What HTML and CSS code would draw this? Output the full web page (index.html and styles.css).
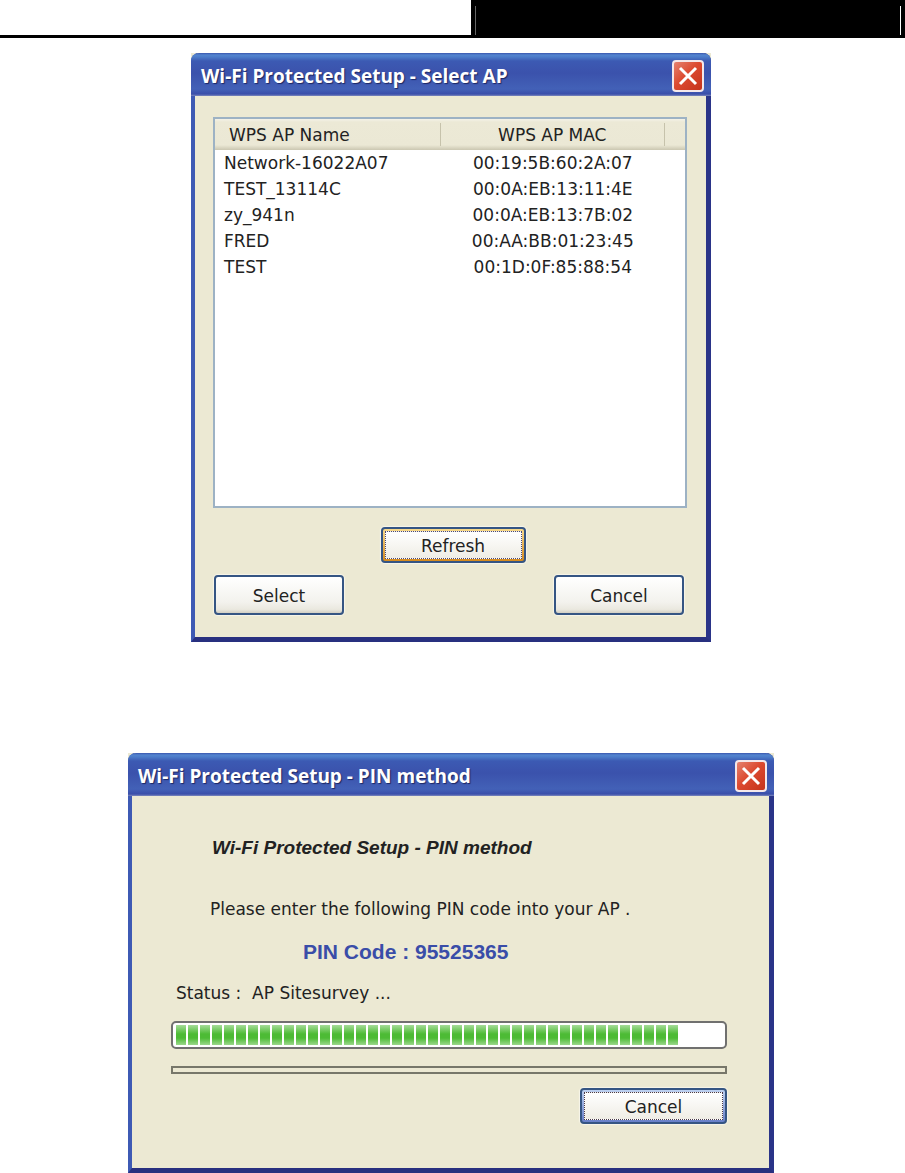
FILE: index.html
```
<!DOCTYPE html>
<html lang="en">
<head>
    <meta charset="UTF-8">
    <meta name="viewport" content="width=device-width, initial-scale=1.0">
    <title>Wi-Fi Protected Setup</title>
    <link rel="stylesheet" href="styles.css">
</head>
<body>
    <header class="page-header">
        <div class="header-box"></div>
    </header>
    <main>
        <div class="frame select-ap">
            <section class="dialog">
                <div class="title-bar">
                    <h2>Wi-Fi Protected Setup - Select AP</h2>
                    <button class="close" aria-label="Close">
                        <svg viewBox="0 0 32 32" width="32" height="32"><path d="M8 8L24 24M24 8L8 24"/></svg>
                    </button>
                </div>
                <div class="dialog-body">
                    <div class="ap-list">
                        <table>
                            <thead>
                                <tr><th class="name"><span>WPS AP Name</span></th><th class="mac"><span>WPS AP MAC</span></th><th class="rest"></th></tr>
                            </thead>
                            <tbody>
                                <tr><td>Network-16022A07</td><td class="mac">00:19:5B:60:2A:07</td><td></td></tr>
                                <tr><td>TEST_13114C</td><td class="mac">00:0A:EB:13:11:4E</td><td></td></tr>
                                <tr><td>zy_941n</td><td class="mac">00:0A:EB:13:7B:02</td><td></td></tr>
                                <tr><td>FRED</td><td class="mac">00:AA:BB:01:23:45</td><td></td></tr>
                                <tr><td>TEST</td><td class="mac">00:1D:0F:85:88:54</td><td></td></tr>
                            </tbody>
                        </table>
                    </div>
                    <button class="btn refresh"><span>Refresh</span></button>
                    <div class="actions">
                        <button class="btn">Select</button>
                        <button class="btn">Cancel</button>
                    </div>
                </div>
            </section>
        </div>
        <div class="frame pin-method">
            <section class="dialog">
                <div class="title-bar">
                    <h2>Wi-Fi Protected Setup - PIN method</h2>
                    <button class="close" aria-label="Close">
                        <svg viewBox="0 0 32 32" width="32" height="32"><path d="M8 8L24 24M24 8L8 24"/></svg>
                    </button>
                </div>
                <div class="dialog-body">
                    <h3>Wi-Fi Protected Setup - PIN method</h3>
                    <p class="hint">Please enter the following PIN code into your AP .</p>
                    <p class="pin">PIN Code : 95525365</p>
                    <label class="status" for="survey">Status :&nbsp; AP Sitesurvey ...</label>
                    <progress id="survey" value="92" max="100"></progress>
                    <div class="divider"></div>
                    <button class="btn cancel"><span>Cancel</span></button>
                </div>
            </section>
        </div>
    </main>
</body>
</html>
```
FILE: styles.css
```
* {
    box-sizing: border-box;
}
body {
    margin: 0;
    background: #fff;
    color: #222;
    font-family: "DejaVu Sans", Verdana, sans-serif;
    font-size: 17px;
}
h2, h3, p {
    margin: 0;
}
.page-header {
    display: flex;
    justify-content: flex-end;
    height: 38px;
    border-bottom: 3px solid #000;
}
.header-box {
    width: 48%;
    padding: 6px 4px 0;
    background: #000;
}
.header-box::before {
    content: "";
    display: block;
    height: 29px;
    border-left: 1px solid #666;
    border-right: 1px solid #fff;
}
main {
    padding: 15px 3px 0 0;
}
.frame {
    width: 100%;
    margin: 0 auto;
    background: #ece9d3;
}
.select-ap {
    max-width: 520px;
}
.pin-method {
    max-width: 646px;
    margin-top: 111px;
}
.dialog {
    border: solid;
    border-width: 0 5px 5px 4px;
    border-color: #2a3488 #2a3488 #28307f #3e5ab4;
    border-radius: 8px 8px 0 0;
    background: #ece9d3;
}
.title-bar {
    display: flex;
    justify-content: space-between;
    align-items: center;
    height: 43px;
    margin: 0 -5px 0 -4px;
    padding: 2px 7px 0 10px;
    border-radius: 8px 8px 0 0;
    background: linear-gradient(#3a56ae 0, #5384cf 2px, #4c7bc9 4px, #3c5ab3 8px, #3b52ac 20px, #4361b7 36px, #3a4eaa 41px, #7c88bd 43px);
}
.title-bar h2 {
    color: #fff;
    font: bold 19px "Open Sans", sans-serif;
    text-shadow: 1px 1px 1px #1d2763;
}
.close {
    width: 32px;
    height: 32px;
    padding: 0;
    border: 2px solid #f4e8ea;
    border-radius: 4px;
    background: linear-gradient(135deg, #e48270, #dc4a30 45%, #c5331c);
}
.close svg {
    display: block;
    margin: -2px;
    fill: none;
    stroke: #fff;
    stroke-width: 3;
}
.select-ap .dialog-body {
    display: flex;
    flex-direction: column;
    padding: 21px 19px 22px 18px;
}
.ap-list {
    min-height: 391px;
    border: 2px solid #9db2c4;
    background: #fff;
}
table {
    width: 100%;
    border-collapse: collapse;
    table-layout: fixed;
}
th {
    height: 31px;
    padding: 0;
    background: linear-gradient(#f4f2e8 0, #ece9d6 3px, #ebe8d5 26px, #cbc7b1 31px);
    font-weight: normal;
    text-align: left;
}
th span {
    display: block;
    padding: 2px 0 0 14px;
    border-right: 1px solid #c6c2ab;
    line-height: 21px;
    box-shadow: 1px 0 #fff;
}
th.name {
    width: 48%;
}
th.rest {
    width: 20px;
}
td {
    height: 26px;
    padding: 0 0 0 9px;
}
.mac, th.mac span {
    padding-left: 0;
    text-align: center;
}
.btn {
    width: 130px;
    height: 40px;
    padding: 2px 0 0;
    border: 2px solid #355583;
    border-radius: 4px;
    background: linear-gradient(#fff, #f3f2ed 70%, #eae8df 90%, #d2cfc4);
    box-shadow: 0 0 1px 1px #f8f6ea;
    color: #222;
    font: inherit;
}
.btn span {
    display: block;
    height: 100%;
    line-height: 28px;
}
.refresh, .cancel {
    width: 145px;
    height: 36px;
    padding: 2px;
}
.refresh {
    align-self: center;
    margin: 19px 0 12px 6px;
    background: linear-gradient(#f7d98c, #d58a1e);
}
.refresh span {
    border: 1px dotted #4a4a7a;
    background: linear-gradient(#fff, #efede5);
}
.actions {
    display: flex;
    justify-content: space-between;
    padding: 0 3px 0 1px;
}
.pin-method .dialog-body {
    display: flex;
    flex-direction: column;
    padding: 40px 42px 44px 39px;
}
h3 {
    padding-left: 41px;
    font: italic bold 19px/24px "Liberation Sans", Arial, sans-serif;
}
.hint {
    margin-top: 37px;
    padding-left: 39px;
    line-height: 24px;
}
.pin {
    margin-top: 19px;
    padding-left: 132px;
    color: #3a4da8;
    font: bold 21px/24px "Liberation Sans", Arial, sans-serif;
}
.status {
    margin-top: 17px;
    padding-left: 5px;
    line-height: 24px;
}
progress {
    appearance: none;
    width: 100%;
    height: 28px;
    margin-top: 16px;
    padding: 2px 3px;
    border: 2px solid #70706f;
    border-radius: 5px;
    background: #fff;
}
progress::-webkit-progress-bar {
    background: #fff;
}
progress::-webkit-progress-value {
    background: repeating-linear-gradient(90deg, transparent 0 10px, #fff 10px 12px), linear-gradient(#a5dc98, #4dbb35 45%, #4dbb35 65%, #9bd88c);
}
.divider {
    height: 8px;
    margin-top: 17px;
    border: 2px solid #77776a;
}
.cancel {
    align-self: flex-end;
    width: 147px;
    margin-top: 14px;
    background: linear-gradient(#bcd0f0, #6880c8);
}
.cancel span {
    border: 1px dotted #4a3a4a;
    background: linear-gradient(#fff, #efede5);
}
```
